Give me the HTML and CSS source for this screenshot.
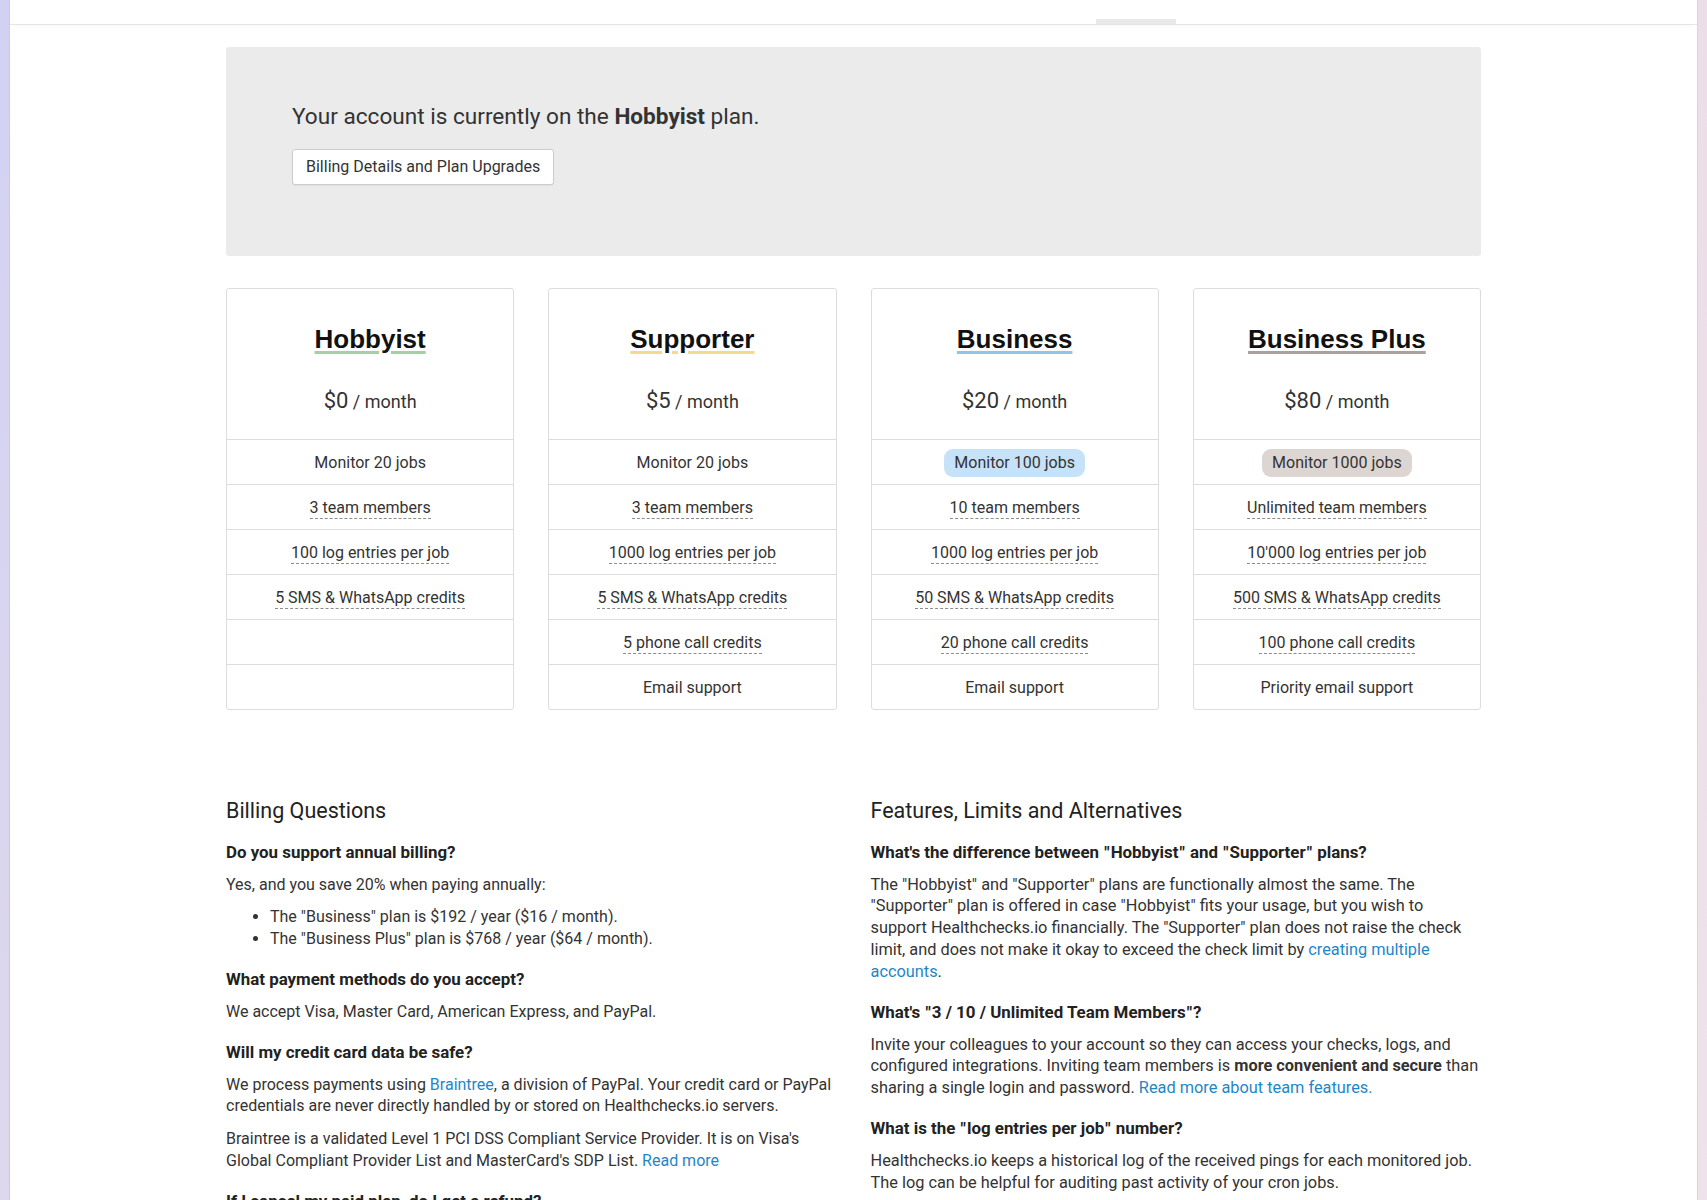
FILE: index.html
```html
<!DOCTYPE html>
<html lang="en">
<head>
<meta charset="utf-8">
<title>Pricing - Healthchecks.io</title>
<link rel="stylesheet" href="styles.css">
</head>
<body>
<div class="frame">
  <div class="edge edge-left"></div>
  <div class="page">
    <header class="topnav">
      <div class="container nav-inner"><span class="nav-active"></span></div>
    </header>
    <main class="container">
      <section class="jumbotron">
        <p class="current-plan">Your account is currently on the <b>Hobbyist</b> plan.</p>
        <a class="btn" href="#">Billing Details and Plan Upgrades</a>
      </section>

      <div class="plans">
        <div class="plan">
          <div class="plan-head">
            <h2 class="plan-name name-hobbyist">Hobbyist</h2>
            <div class="price"><span class="amount">$0</span> / month</div>
          </div>
          <ul class="features">
            <li>Monitor 20 jobs</li>
            <li><span class="tip">3 team members</span></li>
            <li><span class="tip">100 log entries per job</span></li>
            <li><span class="tip">5 SMS &amp; WhatsApp credits</span></li>
            <li></li>
            <li></li>
          </ul>
        </div>
        <div class="plan">
          <div class="plan-head">
            <h2 class="plan-name name-supporter">Supporter</h2>
            <div class="price"><span class="amount">$5</span> / month</div>
          </div>
          <ul class="features">
            <li>Monitor 20 jobs</li>
            <li><span class="tip">3 team members</span></li>
            <li><span class="tip">1000 log entries per job</span></li>
            <li><span class="tip">5 SMS &amp; WhatsApp credits</span></li>
            <li><span class="tip">5 phone call credits</span></li>
            <li>Email support</li>
          </ul>
        </div>
        <div class="plan">
          <div class="plan-head">
            <h2 class="plan-name name-business">Business</h2>
            <div class="price"><span class="amount">$20</span> / month</div>
          </div>
          <ul class="features">
            <li><span class="badge badge-business">Monitor 100 jobs</span></li>
            <li><span class="tip">10 team members</span></li>
            <li><span class="tip">1000 log entries per job</span></li>
            <li><span class="tip">50 SMS &amp; WhatsApp credits</span></li>
            <li><span class="tip">20 phone call credits</span></li>
            <li>Email support</li>
          </ul>
        </div>
        <div class="plan">
          <div class="plan-head">
            <h2 class="plan-name name-plus">Business Plus</h2>
            <div class="price"><span class="amount">$80</span> / month</div>
          </div>
          <ul class="features">
            <li><span class="badge badge-plus">Monitor 1000 jobs</span></li>
            <li><span class="tip">Unlimited team members</span></li>
            <li><span class="tip">10'000 log entries per job</span></li>
            <li><span class="tip">500 SMS &amp; WhatsApp credits</span></li>
            <li><span class="tip">100 phone call credits</span></li>
            <li>Priority email support</li>
          </ul>
        </div>
      </div>

      <div class="faq">
        <div class="faq-col">
          <h2>Billing Questions</h2>
          <h4>Do you support annual billing?</h4>
          <p>Yes, and you save 20% when paying annually:</p>
          <ul>
            <li>The "Business" plan is $192 / year ($16 / month).</li>
            <li>The "Business Plus" plan is $768 / year ($64 / month).</li>
          </ul>
          <h4>What payment methods do you accept?</h4>
          <p>We accept Visa, Master Card, American Express, and PayPal.</p>
          <h4>Will my credit card data be safe?</h4>
          <p>We process payments using <a href="#">Braintree</a>, a division of PayPal. Your credit card or PayPal credentials are never directly handled by or stored on Healthchecks.io servers.</p>
          <p>Braintree is a validated Level 1 PCI DSS Compliant Service Provider. It is on Visa's Global Compliant Provider List and MasterCard's SDP List. <a href="#">Read more</a></p>
          <h4>If I cancel my paid plan, do I get a refund?</h4>
        </div>
        <div class="faq-col faq-col-right">
          <h2>Features, Limits and Alternatives</h2>
          <h4>What's the difference between <span class="q">"</span>Hobbyist<span class="q">"</span> and <span class="q">"</span>Supporter<span class="q">"</span> plans?</h4>
          <p>The "Hobbyist" and "Supporter" plans are functionally almost the same. The "Supporter" plan is offered in case "Hobbyist" fits your usage, but you wish to support Healthchecks.io financially. The "Supporter" plan does not raise the check limit, and does not make it okay to exceed the check limit by <a href="#">creating multiple accounts</a>.</p>
          <h4>What's <span class="q">"</span>3 / 10 / Unlimited Team Members<span class="q">"</span>?</h4>
          <p>Invite your colleagues to your account so they can access your checks, logs, and configured integrations. Inviting team members is <strong>more convenient and secure</strong> than sharing a single login and password. <a href="#">Read more about team features.</a></p>
          <h4>What is the <span class="q">"</span>log entries per job<span class="q">"</span> number?</h4>
          <p>Healthchecks.io keeps a historical log of the received pings for each monitored job. The log can be helpful for auditing past activity of your cron jobs.</p>
        </div>
      </div>
    </main>
  </div>
  <div class="edge edge-right"></div>
</div>
</body>
</html>
```

FILE: styles.css
```css
html, body {
  margin: 0;
  height: 100%;
  overflow: hidden;
}

body {
  font-family: Roboto, "Liberation Sans", Arial, sans-serif;
  font-size: 16px;
  line-height: 21.8px;
  color: #333;
  background: #fff;
}

.frame {
  display: flex;
  height: 1200px;
}

.edge {
  flex: none;
  width: 10px;
}

.edge-left {
  background: linear-gradient(#d3d1f3, #ddd8ec);
  box-shadow: inset -1px 0 0 #cbc8e4;
}

.edge-right {
  background: linear-gradient(#ecdde8, #efe2ea);
  box-shadow: inset 1px 0 0 #e0d2dc;
}

.page {
  flex: 1;
  min-width: 0;
  overflow: hidden;
  background: #fff;
}

.container {
  width: 1255px;
  margin: 0 auto;
}

.topnav {
  height: 24px;
  border-bottom: 1px solid #e6e6e6;
  box-shadow: 0 4px 3px -3px rgba(0, 0, 0, 0.03);
}

.nav-inner {
  height: 24px;
  display: flex;
  align-items: flex-end;
}

.nav-active {
  width: 80px;
  height: 5px;
  margin-left: 870px;
  background: #e9e9e9;
}

/* jumbotron */
.jumbotron {
  margin-top: 22px;
  padding: 57.2px 66px 70.7px;
  background: #ebebeb;
  border-radius: 3px;
}

.current-plan {
  margin: 0;
  font-size: 22.6px;
  line-height: 25.3px;
  color: #333;
}

.current-plan b {
  font-weight: 700;
}

.btn {
  display: inline-flex;
  align-items: center;
  box-sizing: border-box;
  height: 36px;
  margin-top: 19.5px;
  padding: 0 13px;
  border: 1px solid #ccc;
  border-radius: 3px;
  background: #fff;
  color: #333;
  font-size: 16px;
  text-decoration: none;
  box-shadow: 0 1px 1px rgba(0, 0, 0, 0.05);
}

/* plans */
.plans {
  display: grid;
  grid-template-columns: repeat(4, 1fr);
  gap: 34px;
  margin-top: 32.5px;
}

.plan {
  border: 1px solid #ddd;
  border-radius: 3px;
  text-align: center;
}

.plan-head {
  box-sizing: border-box;
  height: 150.3px;
  padding-top: 35px;
}

.plan-name {
  margin: 0;
  font-family: "Liberation Sans", Arial, sans-serif;
  font-size: 26px;
  line-height: 30px;
  font-weight: 700;
  color: #111;
  text-decoration: underline;
  text-decoration-thickness: 3px;
  text-underline-offset: 3px;
}

.name-hobbyist { text-decoration-color: #a3d1a5; }
.name-supporter { text-decoration-color: #f5da8e; }
.name-business { text-decoration-color: #92c4e6; }
.name-plus { text-decoration-color: #a9a19f; }

.price {
  margin-top: 33.5px;
  font-size: 18px;
  line-height: 26px;
  color: #333;
}

.amount {
  font-size: 22px;
}

.features {
  list-style: none;
  margin: 0;
  padding: 0;
}

.features li {
  display: flex;
  align-items: center;
  justify-content: center;
  box-sizing: border-box;
  height: 45px;
  padding-top: 1px;
  border-top: 1px solid #ddd;
}

.tip {
  border-bottom: 1px dashed #8c8c8c;
}

.badge {
  padding: 3px 10px;
  border-radius: 9px;
}

.badge-business { background: #c6e2f8; }
.badge-plus { background: #ddd5d2; }

/* faq */
.faq {
  display: grid;
  grid-template-columns: 1fr 1fr;
  gap: 34px;
  margin-top: 88.4px;
}

.faq h2 {
  margin: 0 0 18.7px;
  font-size: 21.5px;
  line-height: 23.7px;
  font-weight: 400;
  color: #222;
}

.faq h4 {
  margin: 19.5px 0 9.7px;
  font-size: 16.9px;
  line-height: 21.8px;
  font-weight: 700;
  color: #222;
}

.faq h4 .q {
  padding: 0 1px;
}

.faq p {
  margin: 0 0 10.9px;
}

.faq-col-right p {
  font-size: 16.33px;
}

.faq ul {
  margin: 0 0 10.9px;
  padding-left: 44px;
}

.faq strong {
  font-weight: 700;
}

a {
  color: #1f86c7;
  text-decoration: none;
}
```
